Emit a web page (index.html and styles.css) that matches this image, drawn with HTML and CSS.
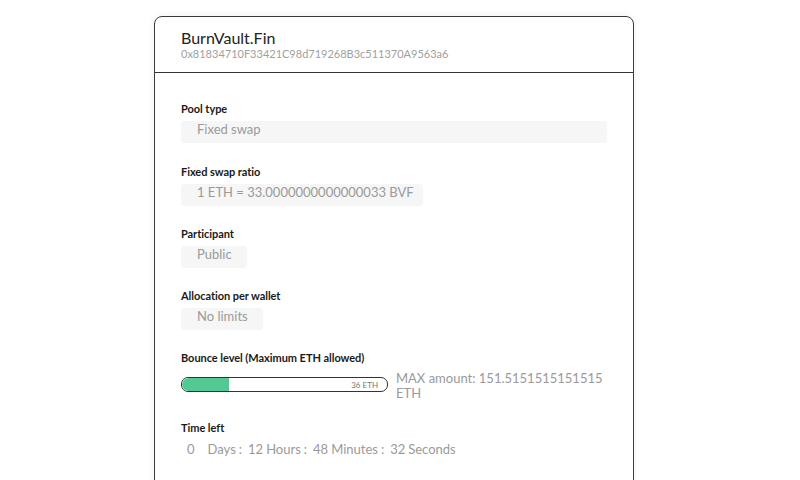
FILE: index.html
```html
<!DOCTYPE html>
<html>
<head>
<meta charset="utf-8">
<link rel="stylesheet" href="styles.css">
</head>
<body>
<div class="page">
  <div class="card">
    <div class="card-head">
      <div class="title">BurnVault.Fin</div>
      <div class="address">0x81834710F33421C98d719268B3c511370A9563a6</div>
    </div>
    <div class="card-body">
      <div class="field first">
        <div class="label">Pool type</div>
        <div class="value full">Fixed swap</div>
      </div>
      <div class="field">
        <div class="label">Fixed swap ratio</div>
        <div class="value ratio">1 ETH = 33.0000000000000033 BVF</div>
      </div>
      <div class="field">
        <div class="label">Participant</div>
        <div class="value">Public</div>
      </div>
      <div class="field">
        <div class="label">Allocation per wallet</div>
        <div class="value">No limits</div>
      </div>
      <div class="field bounce-field">
        <div class="label">Bounce level (Maximum ETH allowed)</div>
        <div class="bounce">
          <div class="bar">
            <div class="fill" style="width: 23%"></div>
            <span class="bar-text">36 ETH</span>
          </div>
          <div class="max">MAX amount: 151.5151515151515 ETH</div>
        </div>
      </div>
      <div class="field">
        <div class="label">Time left</div>
        <div class="time"><span class="num first-num">0</span><span class="unit">Days</span><span class="sep">:</span><span class="num">12</span><span class="unit">Hours</span><span class="sep">:</span><span class="num">48</span><span class="unit">Minutes</span><span class="sep">:</span><span class="num">32</span><span class="unit">Seconds</span></div>
      </div>
      <div class="field">
        <div class="label">Amount</div>
      </div>
    </div>
  </div>
</div>
</body>
</html>
```
FILE: styles.css
```css
html, body {
  margin: 0;
  padding: 0;
  background: #ffffff;
  overflow: hidden;
  height: 480px;
}
body {
  font-family: Lato, "Open Sans", sans-serif;
  color: #222;
}
.page {
  padding: 16px 0 0 154px;
}
.card {
  width: 478px;
  height: 700px;
  border: 1px solid #3a3a3a;
  border-radius: 8px;
  background: #fff;
  box-shadow: 0 0 8px rgba(0,0,0,0.06);
}
.card-head {
  padding: 11px 26px 12px;
  border-bottom: 1px solid #333;
}
.title {
  font-size: 16px;
  line-height: 20px;
  color: #222;
}
.address {
  font-size: 11px;
  line-height: 12px;
  color: #a0a0a0;
}
.card-body {
  padding: 29px 26px 0;
}
.field {
  display: flex;
  flex-direction: column;
  align-items: flex-start;
  margin-bottom: 21px;
}
.field.first {
  margin-bottom: 22px;
}
.field.bounce-field {
  margin-bottom: 20px;
}
.label {
  font-size: 11px;
  font-weight: 700;
  line-height: 14px;
  letter-spacing: -0.05px;
  color: #1a1a1a;
  margin-bottom: 5px;
}
.value {
  background: #f6f6f6;
  border-radius: 4px;
  height: 22px;
  line-height: 17px;
  padding: 0 15px 0 16px;
  font-size: 13px;
  color: #9a9a9a;
  box-sizing: border-box;
}
.value.full {
  align-self: stretch;
}
.value.ratio {
  padding-right: 9px;
}
.bounce {
  display: flex;
  align-items: flex-start;
  gap: 8px;
  margin-top: 1px;
  align-self: stretch;
}
.bar {
  flex: 0 0 205px;
  height: 13px;
  border: 1px solid #333;
  border-radius: 7px;
  margin-top: 6px;
  display: flex;
  align-items: center;
  justify-content: flex-end;
  position: relative;
  overflow: hidden;
}
.fill {
  position: absolute;
  left: 0;
  top: 0;
  bottom: 0;
  background: #52c993;
  border-radius: 7px 0 0 7px;
}
.bar-text {
  font-size: 8px;
  color: #777;
  padding-right: 9px;
  position: relative;
}
.max {
  font-size: 13px;
  line-height: 15px;
  color: #9a9a9a;
  flex: 1;
}
.time {
  display: flex;
  font-size: 13px;
  line-height: 15px;
  color: #9a9a9a;
  padding-top: 2px;
}
.num {
  margin: 0 3px 0 6px;
}
.num.first-num {
  margin-right: 13px;
}
.sep {
  margin-left: 3px;
}
```
